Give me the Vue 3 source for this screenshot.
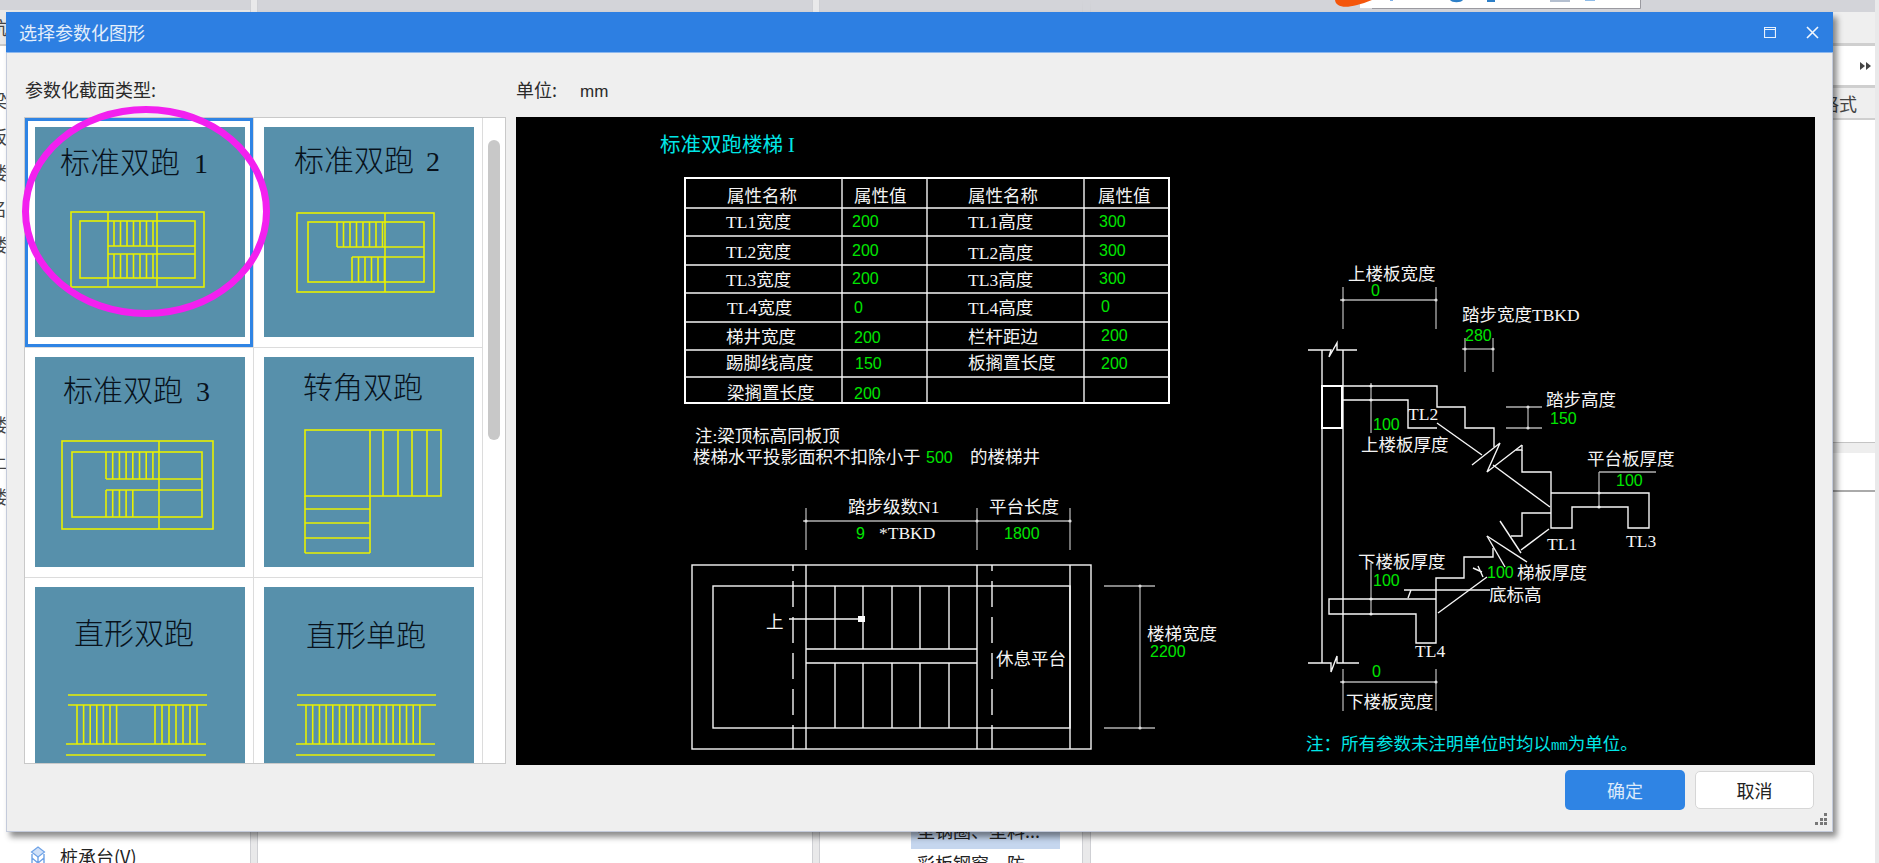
<script setup>
// 步距
const steps = (from, to, gap) => {
  let out = [];
  for (let x = from; x <= to; x += gap) out.push(x);
  return out;
};
const vLines = (xs, y1, y2) => xs.map((x) => [x, y1, x, y2]);
const hLines = (ys, x1, x2) => ys.map((y) => [x1, y, x2, y]);

const thumbs = [
  {
    title: "标准双跑", no: "1", tx: 60, ty: 173, nx: 194, ox: 35, oy: 127, active: true,
    rects: [[71, 212, 133, 75], [80, 221, 115, 57]],
    lines: [
      ...vLines([108, 157], 212, 287),
      ...hLines([246, 254], 108, 195),
      ...vLines(steps(114, 157, 6.5), 221, 246),
      ...vLines(steps(114, 157, 6.5), 254, 278),
    ],
  },
  {
    title: "标准双跑", no: "2", tx: 294, ty: 171, nx: 426, ox: 264, oy: 127,
    rects: [[297, 213, 137, 79], [308, 222, 116, 60]],
    lines: [
      [385, 213, 385, 292],
      [337, 247, 424, 247],
      [352, 257, 424, 257],
      ...vLines(steps(337, 385, 6.5), 222, 247),
      ...vLines(steps(352, 385, 6.5), 257, 282),
    ],
  },
  {
    title: "标准双跑", no: "3", tx: 63, ty: 401, nx: 196, ox: 35, oy: 357,
    rects: [[62, 441, 151, 88], [72, 452, 130, 65]],
    lines: [
      [159, 441, 159, 529],
      ...hLines([479, 490], 106, 202),
      ...vLines(steps(106, 156, 6.7), 452, 479),
      ...vLines(steps(106, 138, 6.7), 490, 517),
    ],
  },
  {
    title: "转角双跑", no: "", tx: 303, ty: 398, ox: 264, oy: 357,
    rects: [[305, 430, 136, 66]],
    lines: [
      [370, 430, 370, 553],
      [305, 496, 305, 553],
      [305, 553, 370, 553],
      ...vLines([383, 398, 412, 427], 430, 496),
      ...hLines([509, 523, 538], 305, 370),
    ],
  },
  {
    title: "直形双跑", no: "", tx: 74, ty: 644, ox: 35, oy: 587,
    rects: [],
    lines: [
      ...hLines([695, 705], 68, 207),
      ...hLines([744, 755], 66, 206),
      ...vLines(steps(77, 117, 6.6), 705, 744),
      ...vLines(steps(155, 197, 7), 705, 744),
    ],
  },
  {
    title: "直形单跑", no: "", tx: 306, ty: 646, ox: 264, oy: 587,
    rects: [],
    lines: [
      ...hLines([695, 705], 297, 436),
      ...hLines([744, 755], 296, 435),
      ...vLines(steps(306, 426, 6.7), 705, 744),
    ],
  },
];

const tableLines = [
  ...vLines([842, 927, 1084], 178, 403),
  ...hLines([208, 236, 265, 293, 322, 350, 377], 685, 1169),
];

const planLines = [
  ...vLines([806, 977, 1070], 565, 749),
  ...hLines([649, 663], 806, 977),
  ...vLines([835, 863, 892, 920, 949], 586, 649),
  ...vLines([835, 863, 892, 920, 949], 663, 728),
  [789, 619, 864, 619],
];

const dimLines = [
  [803, 521, 1070, 521], [806, 508, 806, 550], [977, 508, 977, 550], [1070, 508, 1070, 550],
  [1104, 586, 1155, 586], [1104, 728, 1155, 728], [1140, 586, 1140, 728],
  [1340, 300, 1436, 300], [1343, 287, 1343, 329], [1436, 287, 1436, 329],
  [1462, 349, 1493, 349], [1465, 338, 1465, 372], [1493, 338, 1493, 372],
  [1506, 407, 1542, 407], [1506, 428, 1542, 428], [1528, 407, 1528, 428],
  [1340, 682, 1436, 682], [1343, 669, 1343, 711], [1436, 669, 1436, 711],
  [1371, 383, 1371, 433], [1371, 563, 1371, 614],
  [1599, 472, 1599, 507], [1599, 472, 1656, 472],
];

const dimDots = [
  [806, 521], [977, 521], [1070, 521], [1140, 586], [1140, 728], [1343, 300], [1436, 300],
  [1465, 349], [1493, 349], [1528, 407], [1528, 428], [1343, 682], [1436, 682],
  [1371, 386], [1371, 400], [1371, 599], [1371, 614], [1599, 493], [1599, 507],
];

const sectionPaths = [
  "M1308 350H1331L1329 357L1337 343V350H1357",
  "M1308 663H1331L1331 672L1337 656V663H1359",
  "M1322 350V663M1343 350V663",
  "M1342 386H1437V407H1465V428H1494V447",
  "M1342 400H1408V428H1437",
  "M1522 450V472H1551V528H1572V507H1628V528H1649V493H1551",
  "M1522 445V450H1516",
  "M1551 513H1522V536H1511",
  "M1493 548V557H1464V578H1436V643H1416V614H1329V599H1436",
  "M1437 423L1482 455",
  "M1472 465L1500 443L1487 472L1522 445",
  "M1493 465L1550 507",
  "M1549 529L1521 550",
  "M1500 521L1521 553",
  "M1487 536L1527 562",
  "M1487 536L1505 567",
  "M1438 613L1487 577",
  "M1473 568L1482 572M1478 566L1483 577",
  "M1404 590H1490M1408 598L1411 590",
];

const whites = [
  { t: "属性名称", x: 727, y: 202 }, { t: "属性值", x: 854, y: 202 },
  { t: "属性名称", x: 968, y: 202 }, { t: "属性值", x: 1098, y: 202 },
  { t: "TL1宽度", x: 726, y: 228 }, { t: "TL2宽度", x: 726, y: 258 },
  { t: "TL3宽度", x: 726, y: 286 }, { t: "TL4宽度", x: 727, y: 314 },
  { t: "梯井宽度", x: 726, y: 343 }, { t: "踢脚线高度", x: 726, y: 369 },
  { t: "梁搁置长度", x: 727, y: 399 },
  { t: "TL1高度", x: 968, y: 228 }, { t: "TL2高度", x: 968, y: 259 },
  { t: "TL3高度", x: 968, y: 286 }, { t: "TL4高度", x: 968, y: 314 },
  { t: "栏杆距边", x: 968, y: 343 }, { t: "板搁置长度", x: 968, y: 369 },
  { t: "注:梁顶标高同板顶", x: 695, y: 442 },
  { t: "楼梯水平投影面积不扣除小于", x: 693, y: 463 }, { t: "的楼梯井", x: 970, y: 463 },
  { t: "踏步级数N1", x: 848, y: 513 }, { t: "平台长度", x: 989, y: 513 },
  { t: "*TBKD", x: 879, y: 539 }, { t: "上", x: 766, y: 628 },
  { t: "休息平台", x: 996, y: 665 }, { t: "楼梯宽度", x: 1147, y: 640 },
  { t: "上楼板宽度", x: 1348, y: 280 }, { t: "踏步宽度TBKD", x: 1462, y: 321 },
  { t: "TL2", x: 1408, y: 420 }, { t: "上楼板厚度", x: 1361, y: 451 },
  { t: "踏步高度", x: 1546, y: 406 }, { t: "平台板厚度", x: 1587, y: 465 },
  { t: "TL1", x: 1547, y: 550 }, { t: "TL3", x: 1626, y: 547 }, { t: "TL4", x: 1415, y: 657 },
  { t: "梯板厚度", x: 1517, y: 579 }, { t: "底标高", x: 1489, y: 601 },
  { t: "下楼板厚度", x: 1358, y: 568 }, { t: "下楼板宽度", x: 1346, y: 708 },
];

const greens = [
  { t: "200", x: 852, y: 227 }, { t: "200", x: 852, y: 256 }, { t: "200", x: 852, y: 284 },
  { t: "0", x: 854, y: 313 }, { t: "200", x: 854, y: 343 }, { t: "150", x: 855, y: 369 },
  { t: "200", x: 854, y: 399 },
  { t: "300", x: 1099, y: 227 }, { t: "300", x: 1099, y: 256 }, { t: "300", x: 1099, y: 284 },
  { t: "0", x: 1101, y: 312 }, { t: "200", x: 1101, y: 341 }, { t: "200", x: 1101, y: 369 },
  { t: "500", x: 926, y: 463 }, { t: "9", x: 856, y: 539 }, { t: "1800", x: 1004, y: 539 },
  { t: "2200", x: 1150, y: 657 }, { t: "0", x: 1371, y: 296 }, { t: "280", x: 1465, y: 341 },
  { t: "100", x: 1373, y: 430 }, { t: "150", x: 1550, y: 424 }, { t: "100", x: 1616, y: 486 },
  { t: "100", x: 1487, y: 578 }, { t: "100", x: 1373, y: 586 }, { t: "0", x: 1372, y: 677 },
];

// 左侧导航（大部分被弹窗盖住）
const navRows = ["航", "", "梁", "板", "楼", "名", "楼", "", "", "", "", "楼", "土", "楼"];
const grip = ["", "", "x", "", "x", "x", "x", "x", "x"];
</script>

<template>
  <div class="page">
    <div class="back">
      <div class="navCol">
        <div class="navTop"></div>
        <div v-for="(r, i) in navRows" :key="i" :class="['navRow', i == 0 ? 'navHead' : '']"><span>{{ r }}</span></div>
        <div class="navSpace"></div>
        <div class="navItem">
          <svg width="16" height="20" viewBox="0 0 16 20">
            <path d="M8 1L14.5 6L8 11L1.5 6Z" fill="#cfe0f8" stroke="#6ea2e6" stroke-width="1.2" />
            <path d="M2 8V17M14 8V17M8 11V19M2 12L8 17L14 12" fill="none" stroke="#6ea2e6" stroke-width="1.4" />
          </svg>
          <span>桩承台(V)</span>
        </div>
      </div>
      <div class="split"></div>
      <div class="midCol"></div>
      <div class="split"></div>
      <div class="listCol">
        <div class="listTop">
          <svg class="sketch" width="306" height="9" viewBox="1335 0 306 9">
            <rect x="1360" y="0" width="280" height="8" fill="#fff" />
            <path d="M1640.5 0V8.5H1372" fill="none" stroke="#9a9aa0" />
            <path d="M1335 0C1336 9 1350 9 1372 0Z" fill="#f4560c" />
            <rect x="1390" y="0" width="3" height="1" fill="#7fb0e6" />
            <path d="M1450 0C1452 3 1461 3 1463 0Z" fill="#2d7fc8" />
            <rect x="1487" y="0" width="8" height="2" fill="#2d7fc8" />
            <rect x="1550" y="0" width="20" height="2" fill="#b4bfd0" />
            <rect x="1585" y="0" width="10" height="1" fill="#8fbce8" />
          </svg>
        </div>
        <div class="listSpace"></div>
        <div class="listPick">型钢圈、型料...</div>
        <div class="listNext">彩板钢窗、防</div>
      </div>
      <div class="split split2"></div>
      <div class="rightCol">
        <div class="rightTop"></div>
        <div class="rightHead"></div>
        <div class="rightArrows">
          <svg width="12" height="10" viewBox="0 0 12 10"><path d="M0 1L5 5L0 9ZM6 1L11 5L6 9Z" fill="#444" /></svg>
        </div>
        <div class="rightHead2"><span>格式</span></div>
        <div class="rightBox"></div>
        <div class="rightBand"></div>
        <div class="rightBox2"></div>
        <div class="rightBox3"></div>
      </div>
    </div>

    <div class="dialog">
      <div class="titleBar">
        <span class="titleText">选择参数化图形</span>
        <div class="winBtns">
          <svg width="12" height="11" viewBox="0 0 12 11"><path d="M0.5 0.5H11.5V10.5H0.5ZM0.5 2.5H11.5" fill="none" stroke="#e8f1fc" stroke-width="1.2" /></svg>
          <svg width="13" height="13" viewBox="0 0 13 13"><path d="M1 1L12 12M12 1L1 12" fill="none" stroke="#f2f7fd" stroke-width="1.6" /></svg>
        </div>
      </div>

      <div class="labels">
        <span class="leftLabel">参数化截面类型:</span>
        <span class="unit">单位:</span>
        <span class="mm">mm</span>
      </div>

      <div class="main">
        <div class="listBox">
          <div class="cells">
            <div v-for="(t, i) in thumbs" :key="i" :class="['cell', t.active ? 'cellOn' : '']">
              <svg class="thumb" width="210" height="210" :viewBox="`${t.ox} ${t.oy} 210 210`">
                <text class="thumbText" :x="t.tx" :y="t.ty">{{ t.title }}</text>
                <text v-if="t.no" class="thumbNo" :x="t.nx" :y="t.ty">{{ t.no }}</text>
                <rect v-for="(r, k) in t.rects" :key="'r' + k" :x="r[0]" :y="r[1]" :width="r[2]" :height="r[3]" fill="none" class="yl" />
                <line v-for="(l, k) in t.lines" :key="k" :x1="l[0]" :y1="l[1]" :x2="l[2]" :y2="l[3]" class="yl" />
              </svg>
            </div>
          </div>
          <div class="scroll"><div class="scrollThumb"></div></div>
        </div>

        <svg class="cad" width="1299" height="648" viewBox="516 117 1299 648">
          <text class="cyan" x="660" y="152">标准双跑楼梯 I</text>
          <rect x="685" y="178" width="484" height="225" fill="none" stroke="#fff" stroke-width="2" />
          <line v-for="(l, i) in tableLines" :key="'t' + i" :x1="l[0]" :y1="l[1]" :x2="l[2]" :y2="l[3]" class="wl" />

          <rect x="692" y="565" width="399" height="184" fill="none" class="wl" />
          <rect x="713" y="586" width="357" height="142" fill="none" class="wl" />
          <line v-for="(l, i) in planLines" :key="'p' + i" :x1="l[0]" :y1="l[1]" :x2="l[2]" :y2="l[3]" class="wl" />
          <line x1="793" y1="565" x2="793" y2="749" class="wl dash" />
          <line x1="992" y1="565" x2="992" y2="749" class="wl dash" />
          <rect x="858" y="616" width="7" height="6" fill="#fff" />

          <line v-for="(l, i) in dimLines" :key="'d' + i" :x1="l[0]" :y1="l[1]" :x2="l[2]" :y2="l[3]" class="gl" />
          <circle v-for="(d, i) in dimDots" :key="'o' + i" :cx="d[0]" :cy="d[1]" r="1.6" fill="#ddd" />
          <path v-for="(d, i) in sectionPaths" :key="'s' + i" :d="d" fill="none" class="wl" />
          <rect x="1322" y="386" width="20" height="42" fill="none" stroke="#fff" stroke-width="2" />

          <text v-for="(w, i) in whites" :key="'w' + i" class="white" :x="w.x" :y="w.y">{{ w.t }}</text>
          <text v-for="(g, i) in greens" :key="'g' + i" class="green" :x="g.x" :y="g.y">{{ g.t }}</text>
          <text class="cyan2" x="1306" y="750">注：所有参数未注明单位时均以<tspan class="smallMm">mm</tspan>为单位。</text>
        </svg>
      </div>

      <div class="footer">
        <button class="okBtn">确定</button>
        <button class="noBtn">取消</button>
        <div class="grip"><i v-for="(g, i) in grip" :key="i" :class="g ? 'dot' : ''"></i></div>
      </div>
    </div>

    <div class="ring"></div>
  </div>
</template>

<style>
html, body { margin: 0; padding: 0; background: #fff; }
</style>

<style scoped>
.page {
  position: relative;
  width: 1879px;
  height: 863px;
  overflow: hidden;
  background: #fff;
  font-family: "Noto Sans CJK SC", "Liberation Sans", sans-serif;
  color: #222;
}

.back {
  display: flex;
  height: 100%;
}
.split {
  width: 8px;
  flex-shrink: 0;
  background: #e9e9ea;
  border-left: 1px solid #cfd0d4;
  border-right: 1px solid #cfd0d4;
  box-sizing: border-box;
}
.navCol {
  width: 250px;
  flex-shrink: 0;
  overflow: hidden;
}
.navTop {
  height: 10px;
  background: #d3d4d9;
}
.navRow {
  height: 36px;
  display: flex;
  align-items: center;
  font-size: 18px;
  color: #444;
}
.navRow span {
  margin-left: -11px;
}
.navHead {
  background: #e8e8e8;
  border-bottom: 2px solid #c9c9c9;
  box-sizing: border-box;
  height: 36px;
}
.navSpace {
  height: 324px;
}
.navItem {
  height: 36px;
  display: flex;
  align-items: center;
  gap: 14px;
  padding-left: 30px;
  font-size: 18px;
  color: #222;
}
.midCol {
  width: 554px;
  flex-shrink: 0;
}
.midCol::before {
  content: "";
  display: block;
  height: 12px;
  background: #d3d4d9;
}
.listCol {
  width: 262px;
  flex-shrink: 0;
}
.listTop {
  height: 12px;
  background: #d3d4d9;
}
.listSpace {
  height: 806px;
}
.listPick {
  margin-left: 91px;
  width: 149px;
  height: 31px;
  line-height: 24px;
  padding-left: 6px;
  box-sizing: border-box;
  background: #c5d6ee;
  font-size: 18px;
  white-space: nowrap;
  overflow: hidden;
}
.listNext {
  margin-left: 97px;
  margin-top: 5px;
  font-size: 18px;
  line-height: 18px;
  white-space: nowrap;
}
.split2 {
  width: 9px;
  border-top: 12px solid #d3d4d9;
}
.rightCol {
  flex: 1;
  border-right: 4px solid #e9e9ea;
}
.rightTop {
  height: 12px;
  background: #d3d4d9;
}
.sketch {
  position: absolute;
  left: 1335px;
  top: 0;
  display: block;
}
.rightHead {
  height: 31px;
  background: #efefef;
  border-bottom: 3px solid #cfcfcf;
}
.rightArrows {
  height: 39px;
  display: flex;
  align-items: center;
  justify-content: flex-end;
  padding-right: 3px;
}
.rightHead2 {
  height: 30px;
  background: #efefef;
  border-top: 3px solid #cfcfcf;
  border-bottom: 2px solid #cfcfcf;
  font-size: 18px;
  line-height: 30px;
  color: #444;
  overflow: hidden;
  white-space: nowrap;
}
.rightHead2 span {
  margin-left: 730px;
}
.rightBox {
  height: 322px;
}
.rightBand {
  height: 10px;
  background: #eeeeee;
  border-top: 1px solid #c4c4c4;
}
.rightBox2 {
  height: 37px;
  border-bottom: 2px solid #aaa;
}
.rightBox3 {
  height: 300px;
}

.dialog {
  position: absolute;
  left: 6px;
  top: 12px;
  width: 1827px;
  height: 820px;
  box-sizing: border-box;
  background: #efefef;
  border: 1px solid #c4cbdb;
  border-top: 0;
  box-shadow: 4px 5px 6px rgba(0, 0, 0, 0.45);
  display: flex;
  flex-direction: column;
}
.titleBar {
  height: 41px;
  flex-shrink: 0;
  background: #2d7fe2;
  border-bottom: 1px solid #8db8ee;
  box-sizing: border-box;
  display: flex;
  align-items: center;
  justify-content: space-between;
  padding: 0 14px 0 13px;
  margin: 0 -1px;
}
.titleText {
  color: #e3eefb;
  font-size: 18px;
}
.winBtns {
  display: flex;
  align-items: center;
  gap: 30px;
}
.labels {
  height: 64px;
  flex-shrink: 0;
  display: flex;
  align-items: baseline;
  padding-top: 23px;
  box-sizing: border-box;
  font-size: 18px;
  color: #2a2a2a;
}
.leftLabel {
  margin-left: 18px;
  width: 491px;
}
.unit {
  width: 64px;
}
.mm {
  font-family: "Liberation Sans", sans-serif;
  font-size: 17px;
}
.main {
  display: flex;
  gap: 10px;
  padding-left: 17px;
  height: 648px;
}
.listBox {
  width: 482px;
  height: 647px;
  flex-shrink: 0;
  box-sizing: border-box;
  background: #fff;
  border: 1px solid #c9c9c9;
  display: flex;
  overflow: hidden;
}
.cells {
  width: 458px;
  flex-shrink: 0;
  display: grid;
  grid-template-columns: 229px 229px;
  grid-auto-rows: 230px;
}
.cell {
  box-sizing: border-box;
  border-right: 1px solid #dcdcdc;
  border-bottom: 1px solid #dcdcdc;
  padding: 9px 0 0 10px;
}
.cellOn {
  box-shadow: inset 0 0 0 3px #2f84e4;
}
.thumb {
  display: block;
  background: #5790ab;
}
.thumbText {
  font-family: "Noto Sans CJK SC", sans-serif;
  font-size: 30px;
  font-weight: 300;
  fill: #08121c;
}
.thumbNo {
  font-family: "Liberation Serif", serif;
  font-size: 28px;
  fill: #08121c;
}
.yl {
  stroke: #e8f000;
  stroke-width: 1.6;
}
.scroll {
  flex: 1;
  display: flex;
  justify-content: center;
  padding-top: 22px;
}
.scrollThumb {
  width: 12px;
  height: 300px;
  border-radius: 6px;
  background: #c8c8c8;
}
.cad {
  display: block;
  background: #000;
  flex-shrink: 0;
}
.wl {
  stroke: #f6f6f6;
  stroke-width: 1.4;
}
.gl {
  stroke: #b0b0b0;
  stroke-width: 1.3;
}
.dash {
  stroke-dasharray: 26 10;
  stroke-dashoffset: 20;
}
.white {
  font-family: "Liberation Serif", "Noto Sans CJK SC", serif;
  font-size: 17.5px;
  fill: #f4f4f4;
}
.green {
  font-family: "Liberation Sans", sans-serif;
  font-size: 16px;
  fill: #00e600;
}
.cyan {
  font-family: "Liberation Serif", "Noto Sans CJK SC", serif;
  font-size: 20.5px;
  fill: #00e6e6;
}
.cyan2 {
  font-family: "Noto Sans CJK SC", sans-serif;
  font-size: 17.5px;
  fill: #00e6e6;
}
.smallMm {
  font-family: "Liberation Mono", monospace;
  font-size: 14px;
}
.footer {
  flex: 1;
  position: relative;
  display: flex;
  align-items: center;
  justify-content: flex-end;
  gap: 10px;
  padding: 0 18px 16px 0;
}
.okBtn, .noBtn {
  height: 40px;
  font-family: inherit;
  font-size: 18px;
  border-radius: 5px;
  cursor: pointer;
}
.okBtn {
  width: 120px;
  border: 0;
  background: #2f84e4;
  color: #dbe9fa;
}
.noBtn {
  width: 119px;
  height: 38px;
  border: 1px solid #d6d6d6;
  background: #fff;
  color: #222;
}
.grip {
  position: absolute;
  right: 5px;
  bottom: 6px;
  width: 12px;
  height: 12px;
  display: grid;
  grid-template-columns: repeat(3, 3px);
  grid-auto-rows: 3px;
  gap: 1.5px;
}
.dot {
  display: block;
  background: #777;
}
.ring {
  position: absolute;
  left: 22px;
  top: 106px;
  width: 248px;
  height: 211px;
  box-sizing: border-box;
  border: 7px solid #f320ef;
  border-radius: 50%;
}
</style>
